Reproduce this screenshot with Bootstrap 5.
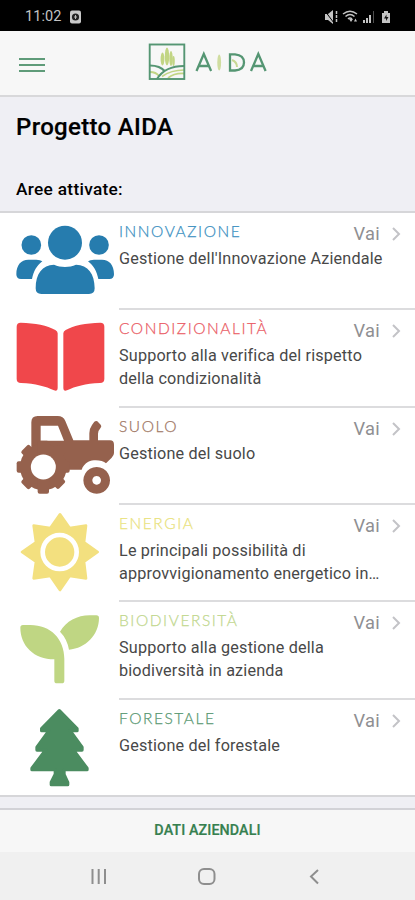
<!DOCTYPE html>
<html lang="it">
<head>
<meta charset="utf-8">
<meta name="viewport" content="width=device-width, initial-scale=1">
<title>Progetto AIDA</title>
<link href="https://cdn.jsdelivr.net/npm/bootstrap@5.3.0/dist/css/bootstrap.min.css" rel="stylesheet">
<style>
body{font-family:Roboto,"Liberation Sans",sans-serif;background:#efeff4;width:415px;height:900px;overflow:hidden;color:#000}
svg{display:block;flex-shrink:0}
.status-bar{height:31px;background:#000;color:#c4c4c4;font-size:14.5px;padding:3px 22px 0 25px;letter-spacing:.1px}
.app-bar{height:66px;background:#f7f7f7;border-bottom:2px solid #d8d8da;padding:4px 19px 0}
.brand{margin-left:103px;margin-top:-4px}
.page-head{height:114px;padding:16px 16px 0}
.page-title{font-size:24px;font-weight:500;line-height:28px;letter-spacing:.33px;-webkit-text-stroke:.2px #000}
.sub-title{font-size:17.3px;font-weight:500;line-height:20px;margin-top:38px;letter-spacing:.3px}
.areas{height:586px;background:#fff;border-bottom:2px solid #d6d6d9}
.area-row{height:97.33px;padding-left:16px}
.area-icon{width:103px;padding-top:2px}
.area-body{border-top:2px solid #dcdcde;padding-top:10px}
.area-row:first-child{border-top:2px solid #d6d6d9}
.area-row:first-child .area-body{border-top:0}
.area-row:first-child .area-icon{padding-top:0}
.area-name{font-family:Lato,sans-serif;font-size:15.5px;font-weight:300;line-height:17px;letter-spacing:1.55px;-webkit-text-stroke:.25px currentColor}
.area-text{font-size:16.2px;line-height:23px;color:#484848;margin-top:2px;letter-spacing:.17px;white-space:nowrap}
.go{color:#8f8f92;font-size:18.3px;line-height:22px;padding-right:14px;gap:12px;letter-spacing:.3px}
.c-inn{color:#3a8fbf}.c-con{color:#ea5b64}.c-suo{color:#a07764}.c-ene{color:#e9e27c}.c-bio{color:#c1d78d}.c-for{color:#599872}
.bottom-bar{height:44px;margin-top:11px;background:#f7f7f7;border-top:2px solid #d2d2d7;color:#36804f;font-size:14.3px;font-weight:500;letter-spacing:.1px;-webkit-text-stroke:.2px #36804f}
.nav-keys{height:48px;background:#f0f0f0}
</style>
</head>
<body>
<header>
  <div class="status-bar d-flex align-items-center">
    <span>11:02</span>
    <svg class="ms-2" width="11" height="14" viewBox="0 0 11 14"><rect width="11" height="13" y=".5" rx="2" fill="#c8c8c8"/><circle cx="5.500" cy="7" r="3.600" fill="#222"/><path d="M5.500 5v4M4 7h3" stroke="#bbb"/></svg>
    <svg class="ms-auto" width="68" height="16" viewBox="0 0 68 16" fill="#c4c4c4">
      <path d="M0 5h3l5-4v14l-5-4H0z"/><path d="M0 2l9 12" stroke="#000"/><path d="M11.500 2v12" stroke="#c4c4c4" stroke-width="1.500" stroke-dasharray="3 1"/>
      <g fill="none" stroke="#c4c4c4" stroke-width="1.500"><path d="M18 5q7-5.500 14 0M20.500 7.500q4.500-4 9 0M23 10q2-2 4 0"/></g><path d="M24 10l2 3 2-3zM29 12.500l1.500-3 1.500 3zM38 11h2v3h-2zM41 9h2v5h-2zM44 6h2v8h-2z"/><path d="M48 2h1v12h-1z" opacity=".4"/>
      <path d="M57 4h2V2h4v2h2v10h-8z"/><path d="M61.500 5.500L59 9.500h2V12l2.500-4h-2z" fill="#111"/>
    </svg>
  </div>
  <nav class="app-bar d-flex align-items-center">
    <svg width="26" height="16" viewBox="0 0 26 16" stroke="#5f9b79" stroke-width="2"><path d="M0 2h26M0 8h26M0 14h26"/></svg>
    <svg class="brand" width="120" height="40" viewBox="148 43 120 40" fill="none">
      <g fill="#c2d584"><ellipse cx="162.500" cy="59" rx="1.900" ry="6.500"/><ellipse cx="167" cy="56.500" rx="2.200" ry="9"/><ellipse cx="171" cy="58.500" rx="1.700" ry="7.500"/><ellipse cx="173.500" cy="61" rx="1.300" ry="5"/></g>
      <path d="M150 72q6 0 9 4M168 78q6-5 16-4.500" stroke="#c2d584" stroke-width="1.800"/>
      <path d="M150 65.500q10 0 15 6M157 79q8-13 27-13" stroke="#559673" stroke-width="2.200"/><path d="M162 76.500q9-6.500 22-6.500" stroke="#c2d584" stroke-width="1.600"/>
      <rect x="149.700" y="44.500" width="34.600" height="34.500" stroke="#559673" stroke-width="1.900"/>
      <path d="M196.500 71l7.300-17 7.300 17M199 66h9.500M230 54.300h5q9 .7 9 8.200t-9 8h-5zM251 71l7.300-17 7.300 17M253.500 66h9.500" stroke="#559673" stroke-width="2.300"/>
      <ellipse cx="219.200" cy="62.500" rx="1.900" ry="8" fill="#d0dda0"/><path d="M232 60q5 2 5 7" stroke="#c8d894" stroke-width="2"/>
    </svg>
  </nav>
</header>
<main>
  <div class="page-head">
    <h1 class="page-title mb-0">Progetto AIDA</h1>
    <h2 class="sub-title mb-0">Aree attivate:</h2>
  </div>
  <div class="areas">
    <div class="area-row d-flex">
      <div class="area-icon"><svg width="98" height="94" viewBox="48 9 294 282" fill="#267cae"><circle cx="195" cy="98" r="51"/><circle cx="94" cy="105" r="29.500"/><circle cx="297" cy="105" r="29.500"/><path d="M107 235c0-44 20-70 55-71 20 9 46 9 66 0 36 1 56 27 56 71q0 17-17 17H124q-17 0-17-17zM49 193c0-28 14-44 36-44h24q12 0 18 5c-17 13-26 30-31 53H63q-14 0-14-14zM342 193c0-28-14-44-36-44h-24q-12 0-18 5c17 13 26 30 31 53h33q14 0 14-14z"/></svg></div>
      <div class="area-body flex-grow-1"><div class="d-flex justify-content-between"><span class="area-name c-inn">INNOVAZIONE</span><span class="go d-flex align-items-center">Vai <svg width="9" height="14" viewBox="0 0 9 14" fill="none" stroke="#c3c3c7" stroke-width="2"><path d="M1 1l6 6-6 6"/></svg></span></div><div class="area-text">Gestione dell'Innovazione Aziendale</div></div>
    </div>
    <div class="area-row d-flex">
      <div class="area-icon"><svg width="98" height="94" viewBox="48 16 294 282" fill="#f0474b"><path d="M62 54c44 1 80 8 104 22q7 4 7 10v163q0 12-11 8c-25-12-55-20-99-22q-13 0-13-12V66q0-12 12-12zM301 54c-44 1-80 8-104 22q-7 4-7 10v163q0 12 11 8c25-12 55-20 99-22q13 0 13-12V66q0-12-12-12z"/></svg></div>
      <div class="area-body flex-grow-1"><div class="d-flex justify-content-between"><span class="area-name c-con">CONDIZIONALITÀ</span><span class="go d-flex align-items-center">Vai <svg width="9" height="14" viewBox="0 0 9 14" fill="none" stroke="#c3c3c7" stroke-width="2"><path d="M1 1l6 6-6 6"/></svg></span></div><div class="area-text">Supporto alla verifica del rispetto<br>della condizionalità</div></div>
    </div>
    <div class="area-row d-flex">
      <div class="area-icon"><svg width="98" height="94" viewBox="48 23 294 282" fill="#95614d" fill-rule="evenodd"><path d="M94 150V66q0-19 19-19h60q17 0 23 15l24 58h48V99q0-14 8-25l7-10q5-4 9-1l10 10q4 4 0 9-8 9-8 18v20h36q12 0 12 13v25q0 8-7 14l-17 17c-10-10-36-13-53-5-10 5-17 14-20 24H130zM122 76v45h70l-18-45z"/>
      <circle cx="130" cy="200" r="70"/><rect x="113" y="121" width="34" height="159" rx="6"/><rect x="113" y="121" width="34" height="159" rx="6" transform="rotate(45 130 200)"/><rect x="113" y="121" width="34" height="159" rx="6" transform="rotate(90 130 200)"/><rect x="113" y="121" width="34" height="159" rx="6" transform="rotate(135 130 200)"/><circle cx="130" cy="200" r="37.500" fill="#fff"/>
      <path d="M290 200a40 40 0 1 0 .1 0zM290 227a13 13 0 1 1-.1 0z"/></svg></div>
      <div class="area-body flex-grow-1"><div class="d-flex justify-content-between"><span class="area-name c-suo">SUOLO</span><span class="go d-flex align-items-center">Vai <svg width="9" height="14" viewBox="0 0 9 14" fill="none" stroke="#c3c3c7" stroke-width="2"><path d="M1 1l6 6-6 6"/></svg></span></div><div class="area-text">Gestione del suolo</div></div>
    </div>
    <div class="area-row d-flex">
      <div class="area-icon"><svg width="98" height="94" viewBox="48 15 294 282" fill="#f3e07f"><path d="M180 43L209 84 258 77 252 127 293 156 252 185 258 235 209 228 180 270 151 228 101 235 108 185 66 156 108 127 101 77 151 84z" stroke="#f3e07f" stroke-width="8" stroke-linejoin="round"/><circle cx="179" cy="156" r="51" stroke="#fff" stroke-width="14"/></svg></div>
      <div class="area-body flex-grow-1"><div class="d-flex justify-content-between"><span class="area-name c-ene">ENERGIA</span><span class="go d-flex align-items-center">Vai <svg width="9" height="14" viewBox="0 0 9 14" fill="none" stroke="#c3c3c7" stroke-width="2"><path d="M1 1l6 6-6 6"/></svg></span></div><div class="area-text">Le principali possibilità di<br>approvvigionamento energetico in…</div></div>
    </div>
    <div class="area-row d-flex">
      <div class="area-icon"><svg width="98" height="94" viewBox="48 7 294 282" fill="#bfd683"><path d="M69 76h22c61 0 102 42 102 102v65q0 8-8 8h-14q-8 0-8-8v-64c-61 0-102-41-102-95q0-8 8-8zM180 96c18-31 52-49 89-49h20q8 0 8 8c0 50-39 91-90 95q-6-33-27-54z"/></svg></div>
      <div class="area-body flex-grow-1"><div class="d-flex justify-content-between"><span class="area-name c-bio">BIODIVERSITÀ</span><span class="go d-flex align-items-center">Vai <svg width="9" height="14" viewBox="0 0 9 14" fill="none" stroke="#c3c3c7" stroke-width="2"><path d="M1 1l6 6-6 6"/></svg></span></div><div class="area-text">Supporto alla gestione della<br>biodiversità in azienda</div></div>
    </div>
    <div class="area-row d-flex">
      <div class="area-icon"><svg width="98" height="94" viewBox="48 14 294 282" fill="#4b8c60" stroke="#4b8c60" stroke-width="10" stroke-linejoin="round"><path d="M178 46l53 54v6h-21l36 50v8h-26l41 55v4h-69v14l11 24v7h-49v-7l12-24v-14H96v-4l41-55h-26v-8l36-50h-22v-6z"/></svg></div>
      <div class="area-body flex-grow-1"><div class="d-flex justify-content-between"><span class="area-name c-for">FORESTALE</span><span class="go d-flex align-items-center">Vai <svg width="9" height="14" viewBox="0 0 9 14" fill="none" stroke="#c3c3c7" stroke-width="2"><path d="M1 1l6 6-6 6"/></svg></span></div><div class="area-text">Gestione del forestale</div></div>
    </div>
  </div>
</main>
<footer>
  <div class="bottom-bar d-flex align-items-center justify-content-center">DATI AZIENDALI</div>
  <div class="nav-keys"><svg width="415" height="48" fill="none" stroke="#8e8e8e" stroke-width="2"><path d="M92.500 17v15M98.700 17v15M105 17v15M318 18l-7 6.500 7 7"/><rect x="199" y="17" width="15.500" height="15" rx="5"/></svg></div>
</footer>
<script src="https://cdn.jsdelivr.net/npm/bootstrap@5.3.0/dist/js/bootstrap.bundle.min.js"></script>
</body>
</html>
